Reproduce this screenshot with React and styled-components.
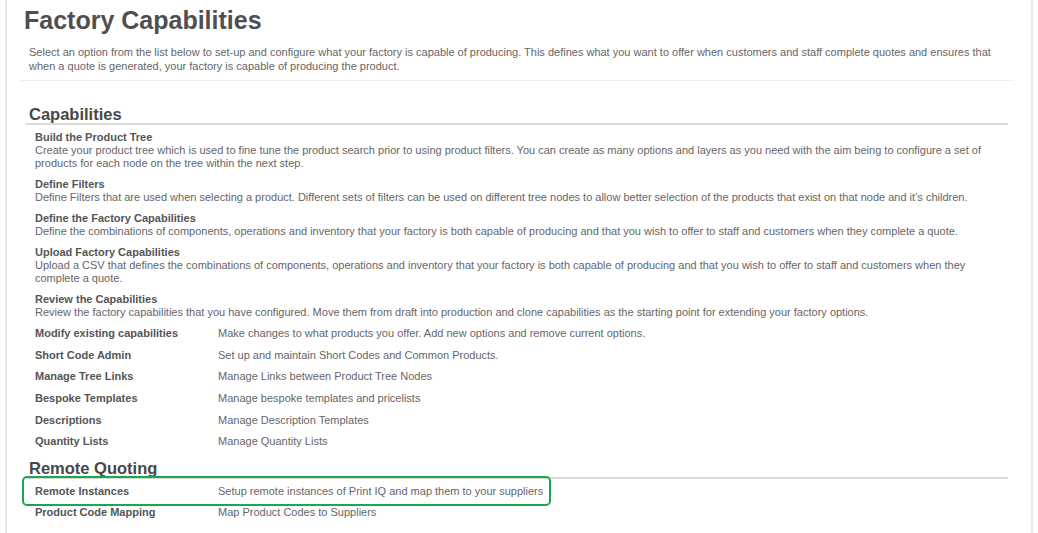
import React from "react"
import styled, { createGlobalStyle } from "styled-components"

const GlobalStyle = createGlobalStyle`
  html, body {
    margin: 0;
    padding: 0;
    background: #fff;
  }

  body {
    font-family: "Liberation Sans", Arial, sans-serif;
    font-size: 11px;
    color: #666;
  }
`

const Frame = styled.div`
  box-sizing: border-box;
  margin-left: 5px;
  width: 1028px;
  min-height: 533px;
  border-left: 2px solid #e6e6e6;
  border-right: 2px solid #e6e6e6;
  padding-top: 5px;
`

const Intro = styled.header`
  margin: 0 17px 0 13px;
  padding-bottom: 7px;
  border-bottom: 1px solid #eee;
`

const Title = styled.h1`
  margin: 0 0 10px 4px;
  font-size: 25px;
  line-height: 30px;
  font-weight: 700;
  color: #4f4f4f;
`

const Lead = styled.p`
  margin: 0 0 0 9px;
  padding-right: 10px;
  line-height: 14px;
  color: #666;
`

const Section = styled.section`
  margin: ${(p) => p.$top}px 23px 0 19px;
`

const Heading = styled.h2`
  margin: 0;
  padding: 3px 0 0 3px;
  font-size: 16.5px;
  line-height: 17px;
  font-weight: 700;
  color: #474747;
  border-bottom: 2px solid #d9d9d9;
`

const Steps = styled.div`
  display: flex;
  flex-direction: column;
  gap: 8px;
  padding: 6px 0 0 9px;
`

const Step = styled.div`
  line-height: 13px;

  strong {
    display: block;
    color: #555;
  }

  p {
    margin: 0;
    color: #666;
  }
`

const Links = styled.div`
  padding: ${(p) => p.$top}px 0 0 9px;
`

const Row = styled.div`
  position: relative;
  display: grid;
  grid-template-columns: 183px 1fr;
  height: 21.6px;
  align-items: center;
  line-height: 13px;

  strong {
    color: #555;
  }

  span {
    color: #666;
  }
`

const Highlight = styled.div`
  position: absolute;
  left: -13px;
  top: -5px;
  width: 529px;
  height: 30px;
  box-sizing: border-box;
  border: 2px solid #19a84a;
  border-radius: 5px;
  pointer-events: none;
`

const steps = [
  {
    title: "Build the Product Tree",
    text: "Create your product tree which is used to fine tune the product search prior to using product filters. You can create as many options and layers as you need with the aim being to configure a set of products for each node on the tree within the next step.",
  },
  {
    title: "Define Filters",
    text: "Define Filters that are used when selecting a product. Different sets of filters can be used on different tree nodes to allow better selection of the products that exist on that node and it’s children.",
  },
  {
    title: "Define the Factory Capabilities",
    text: "Define the combinations of components, operations and inventory that your factory is both capable of producing and that you wish to offer to staff and customers when they complete a quote.",
  },
  {
    title: "Upload Factory Capabilities",
    text: "Upload a CSV that defines the combinations of components, operations and inventory that your factory is both capable of producing and that you wish to offer to staff and customers when they complete a quote.",
  },
  {
    title: "Review the Capabilities",
    text: "Review the factory capabilities that you have configured. Move them from draft into production and clone capabilities as the starting point for extending your factory options.",
  },
]

const tools = [
  ["Modify existing capabilities", "Make changes to what products you offer. Add new options and remove current options."],
  ["Short Code Admin", "Set up and maintain Short Codes and Common Products."],
  ["Manage Tree Links", "Manage Links between Product Tree Nodes"],
  ["Bespoke Templates", "Manage bespoke templates and pricelists"],
  ["Descriptions", "Manage Description Templates"],
  ["Quantity Lists", "Manage Quantity Lists"],
]

const remote = [
  ["Remote Instances", "Setup remote instances of Print IQ and map them to your suppliers", true],
  ["Product Code Mapping", "Map Product Codes to Suppliers"],
]

const App = () => (
  <>
    <GlobalStyle />
    <Frame>
      <Intro>
        <Title>Factory Capabilities</Title>
        <Lead>
          Select an option from the list below to set-up and configure what your factory is capable of
          producing. This defines what you want to offer when customers and staff complete quotes and ensures
          that when a quote is generated, your factory is capable of producing the product.
        </Lead>
      </Intro>

      <Section $top={22}>
        <Heading>Capabilities</Heading>
        <Steps>
          {steps.map((s) => (
            <Step key={s.title}>
              <strong>{s.title}</strong>
              <p>{s.text}</p>
            </Step>
          ))}
        </Steps>
        <Links $top={4}>
          {tools.map(([name, text]) => (
            <Row key={name}>
              <strong>{name}</strong>
              <span>{text}</span>
            </Row>
          ))}
        </Links>
      </Section>

      <Section $top={4}>
        <Heading>Remote Quoting</Heading>
        <Links $top={2}>
          {remote.map(([name, text, marked]) => (
            <Row key={name}>
              <strong>{name}</strong>
              <span>{text}</span>
              {marked && <Highlight />}
            </Row>
          ))}
        </Links>
      </Section>
    </Frame>
  </>
)

export default App
